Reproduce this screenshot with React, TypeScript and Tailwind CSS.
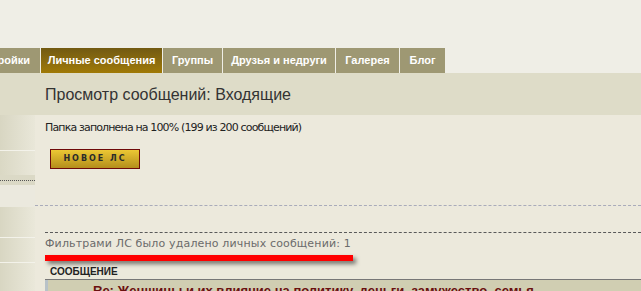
export default function App() {
  const tabs = [
    { label: "ройки", w: "w-[40px]", active: false, align: "justify-end pr-[10px]" },
    { label: "Личные сообщения", w: "w-[121px]", active: true, align: "justify-center" },
    { label: "Группы", w: "w-[59px]", active: false, align: "justify-center" },
    { label: "Друзья и недруги", w: "w-[112px]", active: false, align: "justify-center" },
    { label: "Галерея", w: "w-[63px]", active: false, align: "justify-center" },
    { label: "Блог", w: "w-[45px]", active: false, align: "justify-center" },
  ];
  return (
    <div className="w-[641px] h-[291px] overflow-hidden bg-[#efeee6] font-['Liberation_Sans',Arial,sans-serif]">
      <div className="h-[48px]" />
      <div className="flex gap-px h-[25px] overflow-hidden">
        {tabs.map((t) => (
          <div
            key={t.label}
            className={`${t.w} ${t.align} shrink-0 flex items-center text-[11px] font-bold text-white whitespace-nowrap ${
              t.active
                ? "bg-gradient-to-b from-[#725a12] to-[#a07a06]"
                : "bg-[#9e9873]"
            }`}
          >
            {t.label}
          </div>
        ))}
      </div>
      <div className="h-[42px] bg-[#dedcc8] pl-[45px] pt-[12px]">
        <div className="text-[16px] leading-[20px] text-[#333333]">
          Просмотр сообщений: Входящие
        </div>
      </div>
      <div className="flex">
        <div className="w-[35px] shrink-0 flex flex-col">
          <div className="h-[35px] bg-gradient-to-r from-[#d8d6c2] to-[#e9e7d9]" />
          <div className="h-px bg-[#f3f2ea]" />
          <div className="h-[24px] bg-gradient-to-r from-[#dad8c4] to-[#e9e7d9]" />
          <div className="h-[10px] bg-[#dbd9c6] flex items-center">
            <div className="w-full border-t border-dotted border-[#555555]" />
          </div>
          <div className="h-[22px] bg-[#ebe9de]" />
          <div className="h-[30px] bg-gradient-to-r from-[#d8d6c2] to-[#eae8da]" />
          <div className="h-px bg-[#f3f2ea]" />
          <div className="h-[24px] bg-gradient-to-r from-[#d8d6c2] to-[#eae8da]" />
          <div className="h-px bg-[#f3f2ea]" />
          <div className="h-[40px] bg-gradient-to-r from-[#d8d6c2] to-[#eae8da]" />
        </div>
        <div className="flex-1 bg-[#ece9dc] flex flex-col">
          <div className="pl-[10px] pt-[5px] text-[11px] leading-[16px] text-[#222222] font-['DejaVu_Sans',Verdana,sans-serif] tracking-[-0.85px]">
            Папка заполнена на 100% (199 из 200 сообщений)
          </div>
          <div className="ml-[15px] mt-[13px] w-[90px] h-[20px] border border-[#6e0a0a] bg-gradient-to-b from-[#ecc834] to-[#b48e1c] flex items-center justify-center">
            <span className="text-[8px] font-bold tracking-[2px] text-[#2a2a2a] font-['DejaVu_Sans',Verdana,sans-serif]">
              НОВОЕ ЛС
            </span>
          </div>
          <div className="mt-[36px] border-t border-dashed border-[#a9abba]" />
          <div className="mt-[26px] ml-[10px] border-t border-dashed border-[#5a5a5a]" />
          <div className="mt-[3px] pl-[10px] text-[11px] leading-[16px] text-[#6b6b6b] tracking-[0.15px] font-['DejaVu_Sans',Verdana,sans-serif]">
            Фильтрами ЛС было удалено личных сообщений: 1
          </div>
          <div className="mt-[3px] ml-[10px] w-[308px] h-[6px] bg-[#ff0000] shadow-[3px_3px_4px_rgba(0,0,0,0.5)]" />
          <div className="mt-[5px] pl-[15px] text-[10px] leading-[12px] font-bold text-[#222222]">
            СООБЩЕНИЕ
          </div>
          <div className="mt-[1px] ml-[10px] border-t border-[#777777]" />
          <div className="ml-[10px] h-[20px] bg-[#d0ceb2] border-l-[3px] border-[#b8c2c8] pl-[45px] pt-[3px]">
            <div className="text-[13px] leading-[16px] font-bold text-[#6a1010] whitespace-nowrap">
              Re: Женщины и их влияние на политику, деньги, замужество, семья
            </div>
          </div>
        </div>
      </div>
    </div>
  );
}
